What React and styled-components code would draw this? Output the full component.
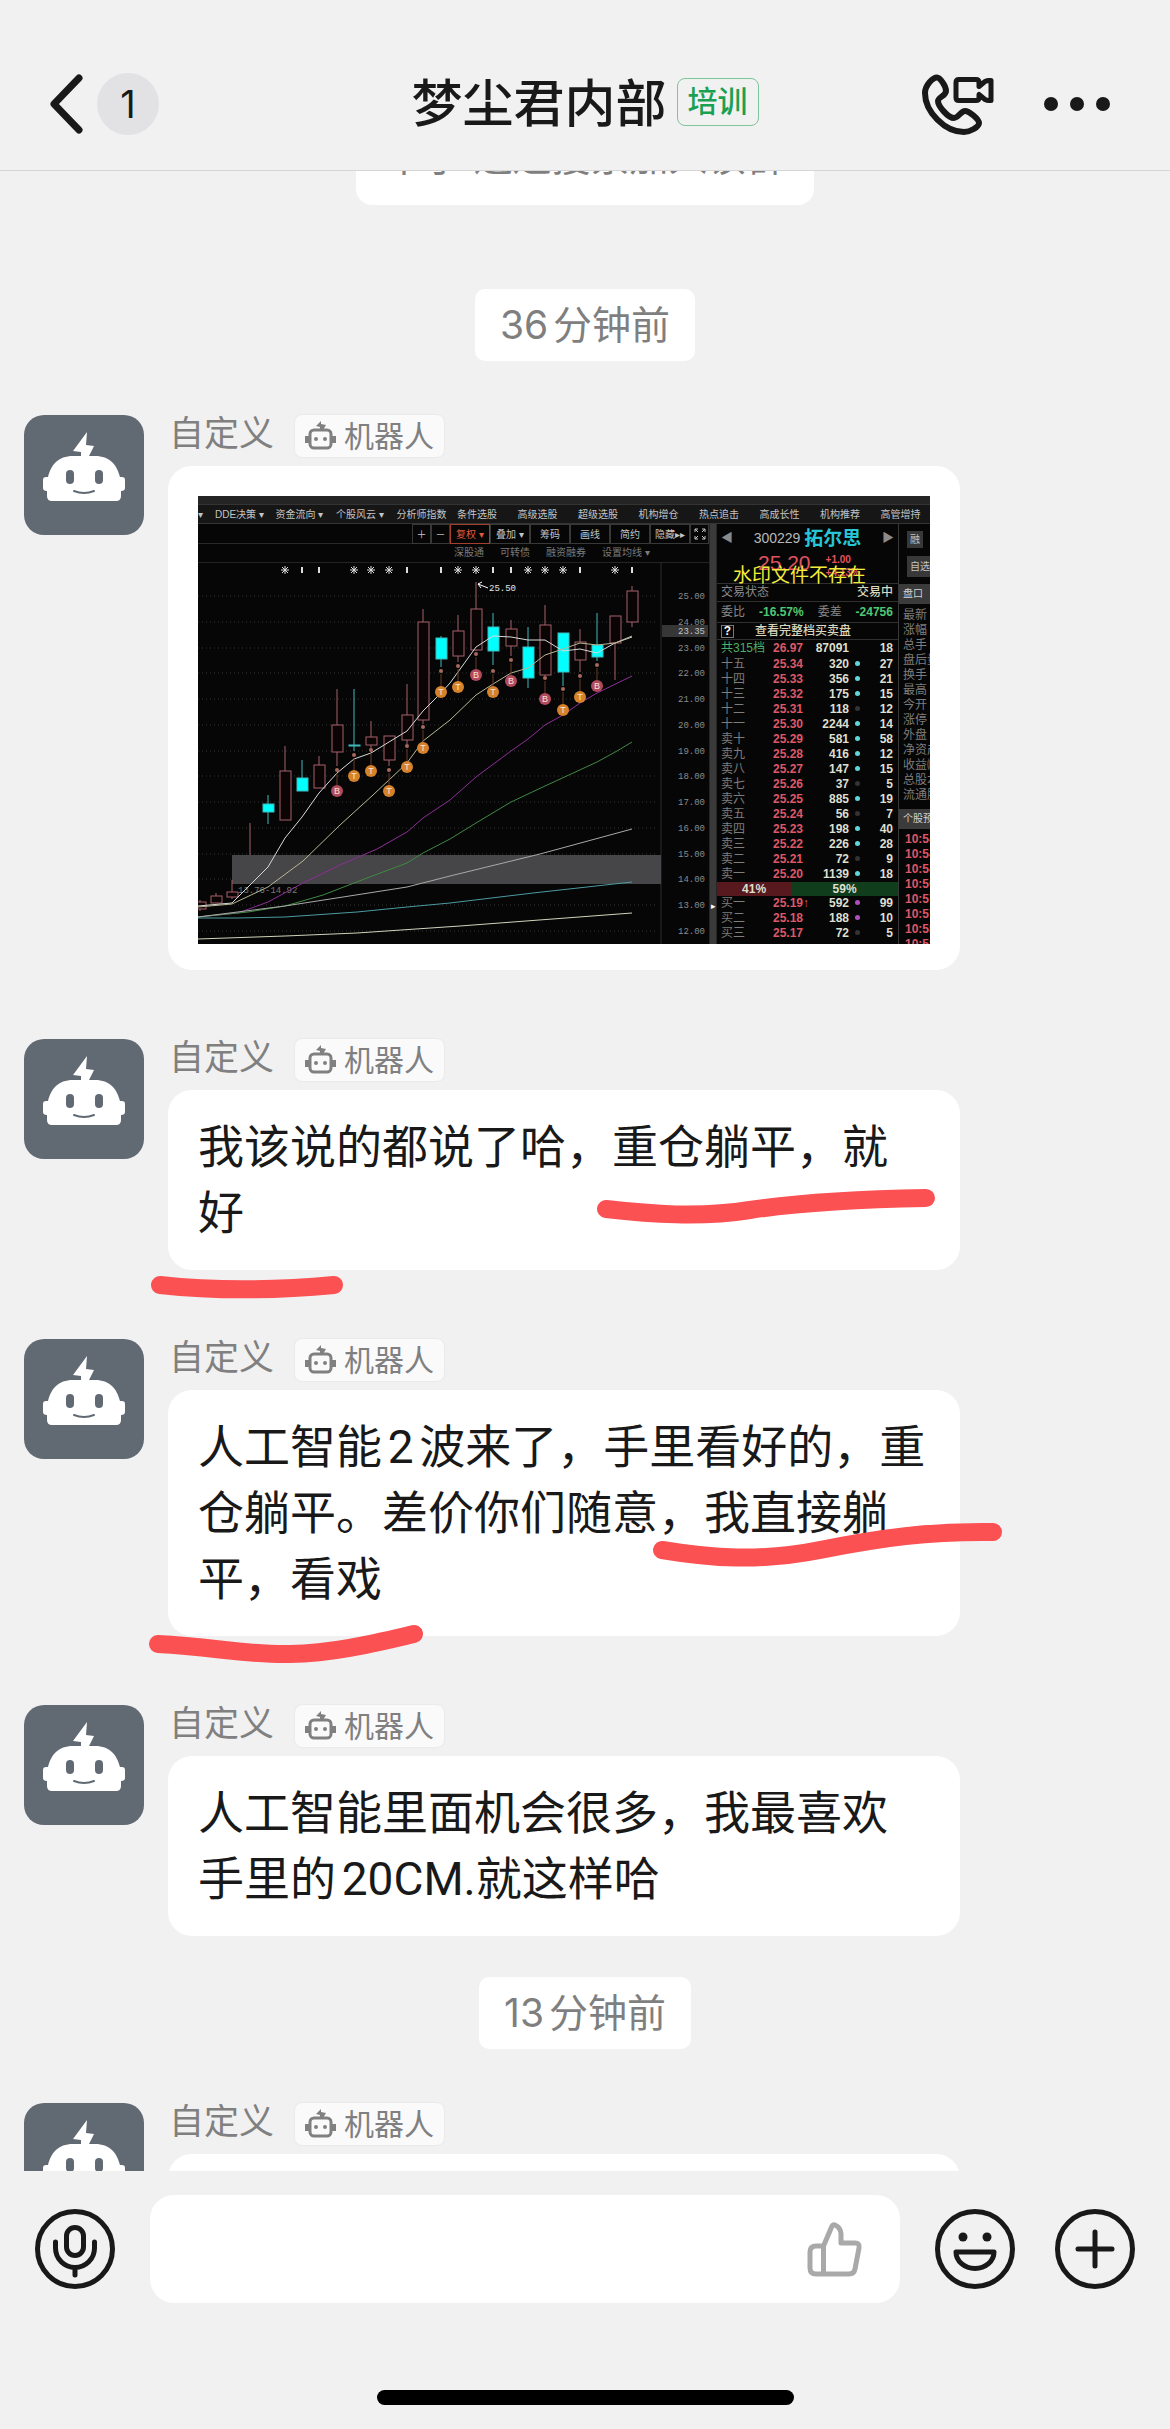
import styled, { createGlobalStyle } from "styled-components"

const GlobalStyle = createGlobalStyle`
  * {
    box-sizing: border-box;
  }

  body {
    margin: 0;
    background-color: #f1f1f2;
    color: #191919;
    font-family: Inter, "Noto Sans CJK SC", sans-serif;
    text-autospace: normal;
  }

  button {
    display: flex;
    padding: 0;
    border: none;
    background: none;
    color: inherit;
    font: inherit;
    cursor: pointer;
  }

  svg {
    display: block;
    flex-shrink: 0;
  }
`;

const Page = styled.div`
  height: 100vh;
  display: flex;
  flex-direction: column;
  overflow: hidden;
`;

const Header = styled.header`
  display: grid;
  grid-template-columns: 1fr auto 1fr;
  align-items: center;
  height: 171px;
  padding: 38px 48px 0;
  border-bottom: 1px solid #d6d6d7;
`;

const HeaderLeft = styled.div`
  display: flex;
  align-items: center;
  gap: 9px;
`;

const Unread = styled.span`
  width: 62px;
  height: 62px;
  border-radius: 50%;
  background-color: #e2e2e4;
  font-size: 38px;
  line-height: 62px;
  text-align: center;
`;

const HeaderTitle = styled.div`
  display: flex;
  align-items: center;
  gap: 10px;
`;

const Title = styled.h1`
  margin: 0;
  font-size: 51px;
  font-weight: 500;
  line-height: 66px;
`;

const TitleTag = styled.span`
  padding: 0 10px 2px;
  margin-bottom: 4px;
  border: 1px solid #7cc69b;
  border-radius: 8px;
  color: #1aa053;
  font-size: 30px;
  font-weight: 500;
  line-height: 44px;
`;

const HeaderRight = styled.div`
  display: flex;
  align-items: center;
  justify-content: flex-end;
  gap: 48px;
  padding-right: 12px;
`;

const Chat = styled.main`
  flex: 1;
  min-height: 0;
  overflow: hidden;
`;

/* the thread is scrolled part of the way through the notice */
const Thread = styled.div`
  position: relative;
  display: flex;
  flex-direction: column;
  margin-top: -62px;
`;

const Notice = styled.p`
  align-self: center;
  margin: 0 0 84px;
  padding: 20px 29px;
  border-radius: 16px;
  background-color: #fff;
  color: #7f7f7f;
  font-size: 39px;
  line-height: 56px;
`;

const Time = styled.time`
  align-self: center;
  margin-bottom: 54px;
  padding: 8px 25px;
  border-radius: 10px;
  background-color: #fff;
  color: #7f7f7f;
  font-size: 39px;
  line-height: 56px;
`;

const Message = styled.article`
  display: flex;
  align-items: flex-start;
  gap: 24px;
  padding-left: 24px;
  margin-bottom: ${(props) => (props.$last ? "41px" : "69px")};
`;

const MessageBody = styled.div`
  display: flex;
  flex-direction: column;
  gap: 9px;
  width: 792px;
`;

const Sender = styled.div`
  display: flex;
  gap: 21px;
  height: 42px;
  padding-left: 1px;
  color: #808080;
  font-size: 35px;
  line-height: 36px;
`;

const RobotTag = styled.span`
  display: flex;
  align-items: center;
  gap: 8px;
  padding: 0 10px;
  border-radius: 7px;
  background-color: #fafafb;
  box-shadow: 0 0 2px #dcdcdd;
  font-size: 30px;
`;

const Bubble = styled.div`
  min-height: 60px;
  padding: ${(props) => (props.$picture ? "30px 30px 26px" : "24px 30px")};
  border-radius: 24px;
  background-color: #fff;
  font-family: Roboto, "Noto Sans CJK SC", sans-serif;
  font-size: 46px;
  line-height: 66px;
`;

const Strokes = styled.svg`
  position: absolute;
  top: 0;
  left: 0;
  pointer-events: none;
`;

const Footer = styled.footer`
  display: flex;
  flex-direction: column;
  align-items: center;
  gap: 87px;
  padding: 24px 35px;
`;

const Composer = styled.form`
  display: flex;
  align-items: center;
  gap: 35px;
  width: 100%;
`;

const Field = styled.div`
  flex: 1;
  min-width: 0;
  display: flex;
  align-items: center;
  height: 108px;
  padding: 0 35px;
  border-radius: 24px;
  background-color: #fff;
`;

const Input = styled.input`
  flex: 1;
  min-width: 0;
  border: none;
  outline: none;
  background: none;
  font: inherit;
  font-size: 46px;
`;

const Actions = styled.div`
  display: flex;
  gap: 40px;
`;

const HomeBar = styled.div`
  width: 417px;
  height: 15px;
  border-radius: 8px;
  background-color: #000;
`;

// trading terminal

const Terminal = styled.div`
  height: 448px;
  overflow: hidden;
  padding-top: 8px;
  background-color: #060606;
  box-shadow: inset 0 8px #242424;
  color: #c4c4c4;
  font-family: "Liberation Sans", "Noto Sans CJK SC", sans-serif;
  font-size: 10px;
  line-height: 15px;
  text-autospace: no-autospace;
  white-space: nowrap;
`;

const Menu = styled.nav`
  display: grid;
  grid-template-columns: 17px repeat(12, 1fr);
  align-items: center;
  height: 20px;
  margin-right: -11px;
  border-top: 1px solid #343434;
  border-bottom: 1px solid #343434;
  background-color: #161616;
`;

const Panels = styled.div`
  display: flex;
  height: 420px;
`;

const ChartPanel = styled.div`
  width: 511px;
  flex-shrink: 0;
`;

const Toolbar = styled.div`
  display: flex;
  justify-content: flex-end;
  height: 20px;
  border-bottom: 1px solid #2a2a2a;
`;

const Tool = styled.button`
  width: ${(props) => (props.$small ? "19px" : "40px")};
  height: 20px;
  align-items: center;
  justify-content: center;
  border: 1px solid ${(props) => (props.$active ? "#a3402c" : "#383838")};
  color: ${(props) => (props.$active ? "#e0593a" : "#c4c4c4")};
`;

const Tabs = styled.div`
  display: flex;
  gap: 16px;
  height: 19px;
  padding-left: 256px;
  border-bottom: 1px solid #242424;
  color: #7b7b7b;
  line-height: 18px;
`;

const Divider = styled.div`
  width: 8px;
  flex-shrink: 0;
  display: flex;
  align-items: flex-end;
  justify-content: center;
  padding-bottom: 30px;
  border: solid #262626;
  border-width: 0 1px;
  background-color: #3a3a3a;
  color: #fff;
  font-size: 9px;
`;

const Book = styled.section`
  width: 181px;
  flex-shrink: 0;
  font-size: 12px;
`;

const Stock = styled.div`
  display: flex;
  align-items: center;
  justify-content: space-between;
  height: 29px;
  padding: 0 4px;
  color: #8a8a8a;
`;

const StockName = styled.span`
  display: flex;
  align-items: center;
  gap: 4px;
  color: #b9b9b9;
  font-size: 14px;

  b {
    color: #27c5d6;
    font-size: 19px;
  }
`;

const Quote = styled.div`
  position: relative;
  display: flex;
  gap: 15px;
  height: 31px;
  padding-left: 41px;
  border-bottom: 1px solid #303030;
  color: #e2525f;
  font-size: 10px;
  font-weight: bold;
  line-height: 13px;
`;

const Price = styled.span`
  font-size: 21px;
  font-weight: normal;
  line-height: 20px;
`;

const Watermark = styled.span`
  position: absolute;
  top: 10px;
  left: 16px;
  color: #f3ec3c;
  font-family: "Noto Sans CJK SC", sans-serif;
  font-size: 19px;
  font-weight: normal;
  line-height: 21px;
`;

const BookLine = styled.div`
  display: flex;
  align-items: center;
  justify-content: space-between;
  height: ${(props) => props.$height || 18}px;
  padding: 0 5px 0 4px;
  border-bottom: 1px solid #303030;
  color: #8a8a8a;

  b {
    color: #4fc873;
  }

  strong {
    color: #d9d7bd;
    font-weight: 500;
  }
`;

const HelpMark = styled.span`
  width: 13px;
  border: 1px solid #777;
  color: #fff;
  font-weight: bold;
  line-height: 11px;
  text-align: center;
`;

const BookTable = styled.table`
  width: 100%;
  table-layout: fixed;
  border-collapse: collapse;

  td,
  th {
    position: relative;
    height: 15px;
    padding: 0;
    color: #dfdfcd;
    font-weight: bold;
    line-height: 15px;
    text-align: right;
  }

  th {
    width: 48px;
    padding-left: 4px;
    color: #7d7d7d;
    font-weight: normal;
    text-align: left;
  }

  td:nth-child(2) {
    width: 38px;
    color: #dd5866;
  }

  td:nth-child(3) {
    width: 46px;
  }

  td:nth-child(4) {
    width: 16px;
    text-align: center;
  }

  td:last-child {
    padding-right: 5px;
  }
`;

const TotalRow = styled.tr`
  && th,
  && td {
    height: 17px;
  }

  && th {
    color: #4fae67;
  }
`;

const Arrow = styled.span`
  position: absolute;
  left: 100%;
`;

const Dot = styled.i`
  display: inline-block;
  width: 5px;
  height: 5px;
  margin-bottom: 2px;
  border-radius: 50%;
  background-color: ${(props) => props.$color};
`;

const Ratio = styled.div`
  display: grid;
  grid-template-columns: 41fr 59fr;
  height: 14px;
  color: #dfdfcd;
  font-weight: bold;
  line-height: 14px;
  text-align: center;

  span:first-child {
    background-color: #57191d;
  }

  span:last-child {
    background-color: #103d1b;
  }
`;

const Side = styled.aside`
  width: 32px;
  overflow: hidden;
  border-left: 1px solid #383838;
  font-size: 12px;
`;

const SideButtons = styled.div`
  display: flex;
  flex-direction: column;
  gap: 8px;
  height: 60px;
  padding: 7px 0 0 8px;

  button {
    width: max-content;
    padding: 1px 3px;
    background-color: #383838;
    font-size: 10px;
  }

  button:last-child {
    padding: 3px;
  }
`;

const SideTab = styled.div`
  padding-left: 4px;
  background-color: #3b3b3b;
  color: #d2d2d2;
  font-size: 10px;
  line-height: 20px;
`;

const SideList = styled.ul`
  height: 205px;
  margin: 0;
  padding: 4px 0 0 4px;
  color: #7d7d7d;
  line-height: 15px;
  list-style: none;
`;

const TickList = styled(SideList)`
  height: auto;
  padding: 3px 0 0 6px;
  color: #dd5866;
  font-weight: bold;
`;

const menu = ["DDE决策 ▾", "资金流向 ▾", "个股风云 ▾", "分析师指数", "条件选股", "高级选股", "超级选股", "机构增仓", "热点追击", "高成长性", "机构推荐", "高管增持"];
const tools = ["叠加 ▾", "筹码", "画线", "简约", "隐藏▸▸"];

const CYAN = "#5fd6d8";
const DIM = "#333";
const MAGENTA = "#b04fc0";

const asks = [
  ["十五", "25.34", 320, CYAN, 27],
  ["十四", "25.33", 356, CYAN, 21],
  ["十三", "25.32", 175, CYAN, 15],
  ["十二", "25.31", 118, DIM, 12],
  ["十一", "25.30", 2244, CYAN, 14],
  ["卖十", "25.29", 581, CYAN, 58],
  ["卖九", "25.28", 416, CYAN, 12],
  ["卖八", "25.27", 147, CYAN, 15],
  ["卖七", "25.26", 37, DIM, 5],
  ["卖六", "25.25", 885, CYAN, 19],
  ["卖五", "25.24", 56, DIM, 7],
  ["卖四", "25.23", 198, CYAN, 40],
  ["卖三", "25.22", 226, CYAN, 28],
  ["卖二", "25.21", 72, DIM, 9],
  ["卖一", "25.20", 1139, CYAN, 18],
];

const bids = [
  ["买一", "25.19", 592, MAGENTA, 99, true],
  ["买二", "25.18", 188, MAGENTA, 10],
  ["买三", "25.17", 72, DIM, 5],
];

const sideItems = ["最新", "涨幅", "总手", "盘后量", "换手", "最高", "今开", "涨停", "外盘", "净资产", "收益㈣", "总股本", "流通股"];
const ticks = ["10:54", "10:54", "10:54", "10:56", "10:57", "10:57", "10:58", "10:58"];

// x, high, body top, body bottom, low, rising
const candles = [
  [2, 404, 406, 413, 415, true],
  [18, 397, 400, 407, 407, true],
  [34, 384, 396, 401, 403, true],
  [52, 327, 327, 327, 359, true],
  [70, 299, 308, 316, 328, false],
  [87, 250, 275, 324, 324, true],
  [104, 264, 282, 295, 295, false],
  [121, 260, 269, 292, 292, true],
  [139, 193, 229, 256, 270, true],
  [156, 193, 249, 250, 255, false],
  [173, 225, 241, 249, 252, true],
  [191, 240, 240, 264, 270, true],
  [209, 188, 219, 244, 248, true],
  [225, 113, 126, 224, 228, true],
  [243, 140, 142, 163, 171, false],
  [260, 119, 135, 160, 166, true],
  [278, 86, 113, 154, 155, true],
  [295, 117, 131, 155, 169, false],
  [313, 124, 133, 150, 160, true],
  [330, 131, 151, 182, 192, false],
  [347, 109, 129, 179, 180, true],
  [365, 137, 137, 176, 190, false],
  [382, 133, 146, 164, 176, true],
  [399, 117, 149, 161, 165, false],
  [417, 120, 120, 147, 184, true],
  [434, 90, 95, 126, 131, true],
];

// x, y of the badge, letter
const signals = [
  [139, 295, "B"], [156, 280, "T"], [173, 275, "T"], [191, 295, "T"], [209, 271, "T"],
  [225, 252, "T"], [243, 196, "T"], [260, 191, "T"], [278, 179, "B"], [295, 196, "T"],
  [313, 185, "B"], [347, 203, "B"], [365, 214, "T"], [382, 201, "T"], [399, 190, "B"],
];

const averages = [
  ["#d8d8d8", "0,410 34,407 70,371 87,342 104,321 121,297 139,277 156,263 173,257 191,246 209,235 225,215 243,197 252,187 260,176 278,151 295,140 313,141 330,144 347,144 365,155 382,153 399,157 417,147 434,141"],
  ["#b9b592", "0,411 34,408 70,391 105,365 142,329 175,299 209,267 225,245 252,224 278,199 295,188 313,177 330,172 347,159 365,153 382,147 399,149 417,147 434,140"],
  ["#8d2f98", "0,421 40,417 70,406 105,387 142,369 179,353 209,336 225,322 252,304 278,281 313,255 330,243 347,229 365,219 382,207 399,197 434,180"],
  ["#3f8a45", "0,421 50,416 87,410 125,399 169,382 209,367 225,357 252,343 278,327 313,306 347,290 399,266 419,255 434,246"],
  ["#a9a9a9", "0,421 87,410 145,401 209,391 252,380 342,358 434,333"],
  ["#4c9aa0", "0,422 40,422 87,421 159,416 209,411 252,407 335,397 434,386"],
  ["#d2d2bc", "0,443 87,440 159,437 262,430 434,417"],
];

const stars = [87, 156, 173, 191, 260, 278, 330, 347, 365, 417];
const pins = [104, 121, 209, 243, 295, 313, 382, 434];
const prices = [25, 24, 23, 22, 21, 20, 19, 18, 17, 16, 15, 14, 13, 12];

const priceY = (price) => Math.round(100 + (25 - price) * 25.75);

const Chart = () => (
  <svg width="511" height="381" viewBox="0 67 511 381" fontFamily="Liberation Mono, monospace" fontSize="9">
    {prices.map((price) => (
      <g key={price}>
        <line x1="0" x2="458" y1={priceY(price)} y2={priceY(price)} stroke="#333" strokeDasharray="1 3" />
        <text x="507" y={priceY(price) + 3} fill="#8b8b8b" textAnchor="end">{price.toFixed(2)}</text>
      </g>
    ))}
    <line x1="463" x2="463" y1="50" y2="448" stroke="#2c2c2c" />
    <rect x="464" y="129" width="46" height="12" fill="#363636" />
    <text x="507" y="138" fill="#c4c4c4" textAnchor="end">23.35</text>
    <rect x="34" y="359" width="429" height="29" fill="#464547" />
    <text x="40" y="397" fill="#777">13.76-14.92</text>

    {stars.map((x) => (
      <path key={x} d={`M${x - 4} 74h8M${x} 70v8M${x - 3} 71l6 6M${x + 3} 71l-6 6`} stroke="#ddd" />
    ))}
    {pins.map((x) => (
      <path key={x} d={`M${x} 71v6M${x - 1} 72h2M${x - 1} 76h2`} stroke="#ddd" strokeWidth="2" />
    ))}

    {candles.map(([x, high, top, bottom, low, rising]) => (
      <g key={x} stroke={rising ? "#a5616b" : "#3fb9bb"}>
        <path d={`M${x} ${high}V${top}M${x} ${bottom}V${low}`} />
        <rect x={x - 5} y={top} width="11" height={bottom - top} fill={rising ? "#0a0405" : "#0ff"} />
      </g>
    ))}

    {averages.map(([color, points]) => (
      <polyline key={color} points={points} fill="none" stroke={color} />
    ))}

    {signals.map(([x, y, letter]) => (
      <g key={x}>
        <line x1={x} x2={x} y1={y - 18} y2={y - 6} stroke="#6b3a22" />
        <circle cx={x} cy={y - 21} r="2" fill="#a56a5c" />
        <circle cx={x} cy={y} r="6" fill={letter === "B" ? "#b24a5e" : "#d5822b"} />
        <text x={x} y={y + 3} fill="#fbe3d0" fontFamily="Liberation Sans, sans-serif" textAnchor="middle">{letter}</text>
      </g>
    ))}

    <path d="M290 92L280 88M284 86l-4 2 3 4" stroke="#fff" fill="none" />
    <text x="291" y="95" fill="#e8e8e8">25.50</text>
  </svg>
);

const BookRows = ({ rows }) =>
  rows.map(([label, price, amount, color, orders, up]) => (
    <tr key={label}>
      <th scope="row">{label}</th>
      <td>{price}{up && <Arrow>↑</Arrow>}</td>
      <td>{amount}</td>
      <td><Dot $color={color} /></td>
      <td>{orders}</td>
    </tr>
  ));

const TradingTerminal = () => (
  <Terminal>
    <Menu>
      <span>▾</span>
      {menu.map((item) => <span key={item}>{item}</span>)}
    </Menu>
    <Panels>
      <ChartPanel>
        <Toolbar>
          <Tool $small>＋</Tool>
          <Tool $small>－</Tool>
          <Tool $active>复权 ▾</Tool>
          {tools.map((tool) => <Tool key={tool}>{tool}</Tool>)}
          <Tool $small aria-label="全屏">
            <svg width="12" height="12" viewBox="0 0 12 12" fill="none" stroke="#c4c4c4">
              <path d="M1 4V1h3M1 1l3 3M8 1h3v3M11 1L8 4M1 8v3h3M1 11l3-3M8 11h3V8M11 11L8 8" />
            </svg>
          </Tool>
        </Toolbar>
        <Tabs>
          <span>深股通</span>
          <span>可转债</span>
          <span>融资融券</span>
          <span>设置均线 ▾</span>
        </Tabs>
        <Chart />
      </ChartPanel>
      <Divider>▸</Divider>
      <Book>
        <Stock>
          <span>◀</span>
          <StockName>300229<b>拓尔思</b></StockName>
          <span>▶</span>
        </Stock>
        <Quote>
          <Price>25.20</Price>
          <span>+1.00<br />+4.13%</span>
          <Watermark>水印文件不存在</Watermark>
        </Quote>
        <BookLine>
          <span>交易状态</span>
          <strong>交易中</strong>
        </BookLine>
        <BookLine $height={21}>
          <span>委比</span>
          <b>-16.57%</b>
          <span>委差</span>
          <b>-24756</b>
        </BookLine>
        <BookLine $height={17}>
          <HelpMark>?</HelpMark>
          <strong>查看完整档买卖盘</strong>
          <span />
          <span />
        </BookLine>
        <BookTable>
          <tbody>
            <TotalRow>
              <th scope="row">共315档</th>
              <td>26.97</td>
              <td>87091</td>
              <td />
              <td>18</td>
            </TotalRow>
            <BookRows rows={asks} />
          </tbody>
        </BookTable>
        <Ratio>
          <span>41%</span>
          <span>59%</span>
        </Ratio>
        <BookTable>
          <tbody>
            <BookRows rows={bids} />
          </tbody>
        </BookTable>
      </Book>
      <Side>
        <SideButtons>
          <button>融</button>
          <button>自选</button>
        </SideButtons>
        <SideTab>盘口</SideTab>
        <SideList>
          {sideItems.map((item) => <li key={item}>{item}</li>)}
        </SideList>
        <SideTab>个股预</SideTab>
        <TickList>
          {ticks.map((tick, i) => <li key={i}>{tick}</li>)}
        </TickList>
      </Side>
    </Panels>
  </Terminal>
);

// icons

const Avatar = () => (
  <svg width="120" height="120" viewBox="0 0 120 120">
    <rect width="120" height="120" rx="20" fill="#616a73" />
    <path
      fill="#fff"
      d="M63 17L49 36l8 1v4H49C34 41 27 50 24 62h-2q-3 0-3 3v8q0 3 4 3v5q0 5 5 5h64q5 0 5-5v-5q4 0 4-3v-8q0-3-3-3h-2C93 50 86 41 71 41h-6l5-10-8-1z"
    />
    <rect x="42" y="55" width="8" height="14" rx="4" fill="#616a73" />
    <rect x="71" y="55" width="8" height="14" rx="4" fill="#616a73" />
    <path d="M50 76q10 4 20 0" fill="none" stroke="#616a73" strokeWidth="2" strokeLinecap="round" />
  </svg>
);

const RobotIcon = () => (
  <svg width="31" height="30" viewBox="0 0 31 30" fill="none" stroke="#808080">
    <path d="M16 0l-5 5 4 1v3h3l3-5-5-1z" fill="#808080" stroke="none" />
    <rect x="5" y="9" width="21" height="18" rx="4" strokeWidth="3" />
    <path d="M2 15v7M29 15v7" strokeWidth="4" />
    <circle cx="11" cy="18" r="2" fill="#808080" stroke="none" />
    <circle cx="20" cy="18" r="2" fill="#808080" stroke="none" />
  </svg>
);

const BackIcon = () => (
  <svg width="40" height="62" viewBox="0 0 40 62" fill="none" stroke="#191919" strokeWidth="7" strokeLinecap="round" strokeLinejoin="round">
    <path d="M31 5L6 31l25 26" />
  </svg>
);

const CallIcon = () => (
  <svg width="76" height="66" viewBox="0 0 76 66" fill="none" stroke="#191919" strokeWidth="6" strokeLinejoin="round">
    <path d="M17 6.500C20 6.500 26 15 26 20C26 25 18 26 18 30C18 35 28 47 34 47C38 47 41 40 45 40C49 40 59 48 59 52C59 56 50 61 44 61C25 61 5 41 5 22C5 14 13 6.500 17 6.500Z" />
    <path d="M39 8.500h17q3 0 3 3v4l6-5q2-1 4-1h2v20h-2q-2 0-4-1l-6-5v3q0 3-3 3H39q-3 0-3-3v-15q0-3 3-3z" strokeWidth="5" />
  </svg>
);

const MoreIcon = () => (
  <svg width="66" height="62" viewBox="0 0 66 62" fill="#191919">
    <circle cx="7" cy="31" r="7" />
    <circle cx="33" cy="31" r="7" />
    <circle cx="59" cy="31" r="7" />
  </svg>
);

const RoundIcon = ({ children }) => (
  <svg width="80" height="80" viewBox="0 0 80 80" fill="none" stroke="#191919" strokeWidth="5" strokeLinecap="round" strokeLinejoin="round">
    <circle cx="40" cy="40" r="37.500" />
    {children}
  </svg>
);

const ThumbIcon = () => (
  <svg width="60" height="60" viewBox="0 0 60 60" fill="none" stroke="#a9a9a9" strokeWidth="5" strokeLinejoin="round">
    <path d="M18.500 27L27 7q1-2 3-1q6 3 6 9v9h14q5 0 4 5l-4 21q-1 5-6 5H11q-6 0-6-6V33q0-6 6-6zM18.500 27v28" />
  </svg>
);

const RobotMessage = ({ picture, last, children }) => (
  <Message $last={last}>
    <Avatar />
    <MessageBody>
      <Sender>
        自定义
        <RobotTag><RobotIcon />机器人</RobotTag>
      </Sender>
      <Bubble $picture={picture}>{children}</Bubble>
    </MessageBody>
  </Message>
);

const App = () => {
  return (
    <>
      <GlobalStyle />
      <Page>
        <Header>
          <HeaderLeft>
            <button aria-label="返回"><BackIcon /></button>
            <Unread>1</Unread>
          </HeaderLeft>
          <HeaderTitle>
            <Title>梦尘君内部</Title>
            <TitleTag>培训</TitleTag>
          </HeaderTitle>
          <HeaderRight>
            <button aria-label="通话"><CallIcon /></button>
            <button aria-label="更多"><MoreIcon /></button>
          </HeaderRight>
        </Header>

        <Chat>
          <Thread>
            <Notice>木子 通过搜索加入该群</Notice>
            <Time>36分钟前</Time>
            <RobotMessage picture><TradingTerminal /></RobotMessage>
            <RobotMessage>我该说的都说了哈，重仓躺平，就好</RobotMessage>
            <RobotMessage>人工智能2波来了，手里看好的，重仓躺平。差价你们随意，我直接躺平，看戏</RobotMessage>
            <RobotMessage last>人工智能里面机会很多，我最喜欢手里的20CM.就这样哈</RobotMessage>
            <Time>13分钟前</Time>
            <RobotMessage />
            <Strokes width="1170" height="1700" viewBox="0 109 1170 1700" fill="none" stroke="#fb5153" strokeWidth="18" strokeLinecap="round">
              <path d="M606 1209C650 1214 700 1218 750 1210C810 1201 870 1199 926 1198" />
              <path d="M160 1285C215 1291 280 1290 334 1285" />
              <path d="M662 1550C710 1558 760 1562 820 1550C880 1538 930 1531 993 1532" />
              <path d="M158 1644C215 1647 245 1655 290 1654C335 1653 375 1643 414 1634" />
            </Strokes>
          </Thread>
        </Chat>

        <Footer>
          <Composer>
            <button type="button" aria-label="语音">
              <RoundIcon>
                <rect x="31.500" y="18.500" width="17" height="28" rx="8.500" />
                <path d="M20.500 33v6a19.500 19.500 0 0 0 39 0v-6M40 58.500V66" />
              </RoundIcon>
            </button>
            <Field>
              <Input type="text" aria-label="消息" />
              <button type="button" aria-label="赞"><ThumbIcon /></button>
            </Field>
            <Actions>
              <button type="button" aria-label="表情">
                <RoundIcon>
                  <circle cx="28" cy="28" r="4.500" fill="#191919" stroke="none" />
                  <circle cx="52" cy="28" r="4.500" fill="#191919" stroke="none" />
                  <path d="M21 43h38a19 16.500 0 0 1-38 0z" />
                </RoundIcon>
              </button>
              <button type="button" aria-label="添加">
                <RoundIcon>
                  <path d="M23 40h34M40 23v34" />
                </RoundIcon>
              </button>
            </Actions>
          </Composer>
          <HomeBar />
        </Footer>
      </Page>
    </>
  )
}

export default App
